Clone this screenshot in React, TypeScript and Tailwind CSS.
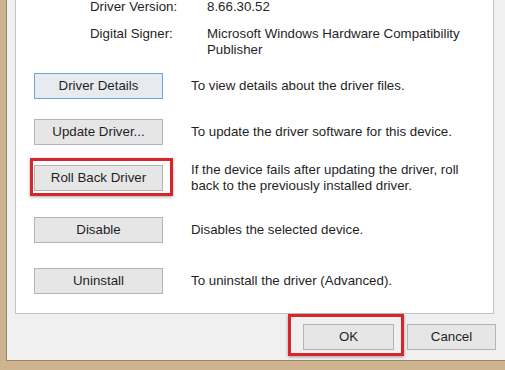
import React from "react";

const font = { fontFamily: '"Liberation Sans", Arial, sans-serif' };

function Btn({ label, focused = false }: { label: string; focused?: boolean }) {
  return (
    <div
      className={
        "flex h-[26px] w-[129px] shrink-0 items-center justify-center border text-[13.3px] text-[#1f1f1f] " +
        (focused ? "border-[#6aa6e0] bg-[#e7ebf0]" : "border-[#b4b4b4] bg-[#e6e6e6]")
      }
    >
      {label}
    </div>
  );
}

function Row({ children, desc, mt }: { children: React.ReactNode; desc: React.ReactNode; mt: string }) {
  return (
    <div className={"flex items-center " + mt}>
      {children}
      <div className="ml-[28px] text-[13.3px] leading-[16px] text-[#1f1f1f]">{desc}</div>
    </div>
  );
}

export default function App() {
  return (
    <div className="flex h-[370px] w-[505px] flex-col overflow-hidden bg-[#cdb48f]" style={font}>
      <div className="flex h-[361px] w-full">
        <div className="w-[6px] shrink-0 bg-[#cdb48f]" />
        <div className="w-[1px] shrink-0 bg-[#9c8565]" />
        <div className="flex flex-1 flex-col border-b border-[#9c8565] bg-[#f0f0f0]">
          <div className="ml-[8px] mr-[11px] h-[314px] border-x border-b border-[#c4c4c4] bg-white pl-[18px]">
            <div className="mt-[-1px] flex text-[13.3px] leading-[16px] text-[#1f1f1f]">
              <div className="ml-[56px] w-[117px]">Driver Version:</div>
              <div>8.66.30.52</div>
            </div>
            <div className="mt-[11px] flex text-[13.3px] leading-[16px] text-[#1f1f1f]">
              <div className="ml-[56px] w-[117px] shrink-0">Digital Signer:</div>
              <div>
                Microsoft Windows Hardware Compatibility
                <br />
                Publisher
              </div>
            </div>
            <Row mt="mt-[15px]" desc="To view details about the driver files.">
              <Btn label="Driver Details" focused />
            </Row>
            <Row mt="mt-[20px]" desc="To update the driver software for this device.">
              <Btn label="Update Driver..." />
            </Row>
            <Row
              mt="mt-[17px]"
              desc={
                <>
                  If the device fails after updating the driver, roll
                  <br />
                  back to the previously installed driver.
                </>
              }
            >
              <div className="relative">
                <Btn label="Roll Back Driver" />
                <div className="pointer-events-none absolute left-[-4px] right-[-10px] top-[-7px] bottom-[-5px] border-[3px] border-[#d7262b] shadow-[0_1px_3px_rgba(0,0,0,0.35)]" />
              </div>
            </Row>
            <Row mt="mt-[23px]" desc="Disables the selected device.">
              <Btn label="Disable" />
            </Row>
            <Row mt="mt-[25px]" desc="To uninstall the driver (Advanced).">
              <Btn label="Uninstall" />
            </Row>
          </div>
          <div className="mt-[10px] flex justify-end pr-[9px]">
            <div className="relative">
              <div className="flex h-[26px] w-[91px] items-center justify-center border border-[#b4b4b4] bg-[#e6e6e6] text-[13.3px] text-[#1f1f1f]">
                OK
              </div>
              <div className="pointer-events-none absolute left-[-15px] right-[-10px] top-[-10px] bottom-[-6px] border-[3px] border-[#d7262b] shadow-[0_1px_3px_rgba(0,0,0,0.35)]" />
            </div>
            <div className="ml-[13px] flex h-[26px] w-[89px] items-center justify-center border border-[#b4b4b4] bg-[#e6e6e6] text-[13.3px] text-[#1f1f1f]">
              Cancel
            </div>
          </div>
        </div>
      </div>
      <div className="h-[9px] w-full bg-[#cdb48f]" />
    </div>
  );
}
